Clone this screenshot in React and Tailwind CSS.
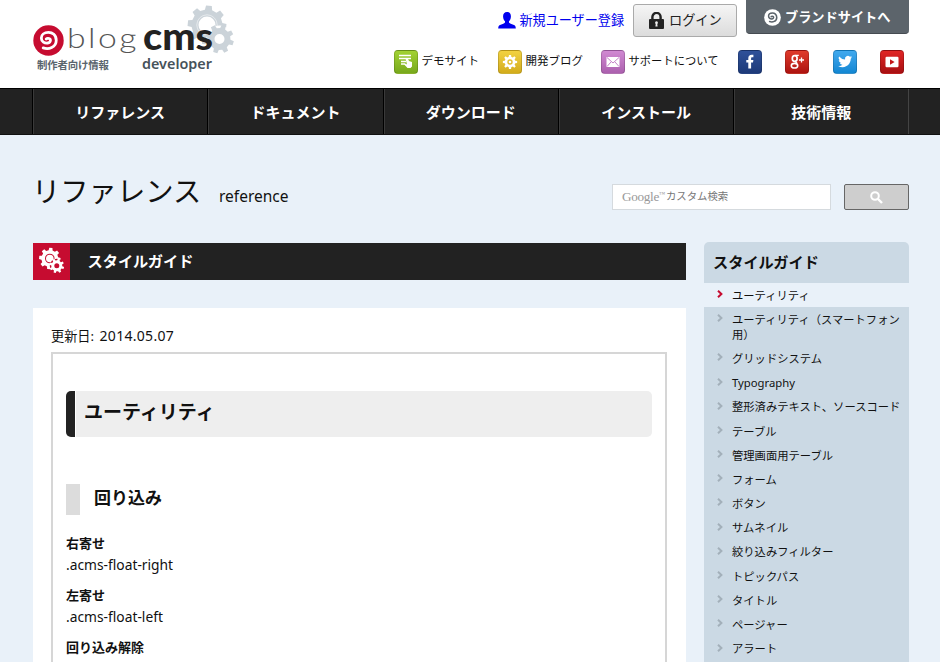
import React from "react";

const JP = "font-['Noto_Sans','Noto_Sans_CJK_JP',sans-serif]";

// Outline of a cog wheel centred on (cx, cy) with a round hole.
function gearPath(cx, cy, outer, inner, hole, teeth, turn = 0) {
  const step = (Math.PI * 2) / teeth;
  const pt = (r, a) => `${(cx + r * Math.cos(a)).toFixed(2)} ${(cy + r * Math.sin(a)).toFixed(2)}`;
  const pts = [];
  for (let i = 0; i < teeth; i++) {
    const a = i * step + turn;
    pts.push(pt(inner, a - step * 0.3), pt(outer, a - step * 0.19), pt(outer, a + step * 0.19), pt(inner, a + step * 0.3));
  }
  return `M${pts.join("L")}Z M${cx + hole} ${cy}a${hole} ${hole} 0 1 0 ${-2 * hole} 0a${hole} ${hole} 0 1 0 ${2 * hole} 0Z`;
}

function Gear({ cx, cy, outer, inner, hole, teeth, turn, ...rest }) {
  return <path fillRule="evenodd" d={gearPath(cx, cy, outer, inner, hole, teeth, turn)} {...rest} />;
}

function Swirl({ size, disc, line }) {
  return (
    <svg width={size} height={size} viewBox="0 0 32 32" className="shrink-0">
      <circle cx="16" cy="16" r="15.7" fill={disc} />
      <path
        d="M10.5 23.6C16 25.6 24 23.4 24 15.8C24 10.2 20 7.6 16 7.6C11.4 7.6 8.6 10.2 8.6 13.4C8.6 17.4 12 19 15.2 18.6C18.6 18.1 19 14.2 16 13.8C14.8 13.6 14 14 13.6 14.4"
        fill="none"
        stroke={line}
        strokeWidth="2.9"
        strokeLinecap="round"
      />
    </svg>
  );
}

function Logo() {
  return (
    <svg width="205" height="72" viewBox="32 2 205 72" className="block">
      <Gear cx={207} cy={25} outer={19.5} inner={15.5} hole={8.5} teeth={8} turn={0.1} fill="#cbd3d9" />
      <circle cx="207" cy="25" r="10.2" fill="none" stroke="#e6eaed" strokeWidth="1" />
      <circle cx="219.5" cy="39" r="13.5" fill="#fff" />
      <Gear cx={219.5} cy={39} outer={14.5} inner={11} hole={5} teeth={8} turn={0.3} fill="#cbd3d9" />
      <svg x="33" y="25" width="31" height="31" viewBox="0 0 32 32">
        <Swirl size={32} disc="#c60c30" line="#fff" />
      </svg>
      <text x="67" y="48" textLength="72" lengthAdjust="spacingAndGlyphs" fontSize="27" className="font-['Lato'] font-light tracking-[2px]" fill="#555">blog</text>
      <text x="143" y="50" textLength="70" lengthAdjust="spacingAndGlyphs" fontSize="37" className="font-['Lato'] font-black" fill="#222">cms</text>
      <text x="37" y="69" textLength="72" fontSize="10.4" className="font-['Noto_Sans_CJK_JP'] font-bold" fill="#5a656d">制作者向け情報</text>
      <text x="142" y="69" textLength="70" lengthAdjust="spacingAndGlyphs" fontSize="14.5" className="font-['Noto_Sans'] font-semibold" fill="#46525a">developer</text>
    </svg>
  );
}

function Tile({ className, children }) {
  return (
    <span className={`flex h-6 w-6 shrink-0 items-center justify-center rounded-[4px] border border-black/15 ${className}`}>
      <svg width="24" height="24" viewBox="0 0 24 24" className="shrink-0">{children}</svg>
    </span>
  );
}

const NAV = ["リファレンス", "ドキュメント", "ダウンロード", "インストール", "技術情報"];

const SIDE = [
  "ユーティリティ（スマートフォン用）",
  "グリッドシステム",
  "Typography",
  "整形済みテキスト、ソースコード",
  "テーブル",
  "管理画面用テーブル",
  "フォーム",
  "ボタン",
  "サムネイル",
  "絞り込みフィルター",
  "トピックパス",
  "タイトル",
  "ページャー",
  "アラート",
];

function SideItem({ label, active }) {
  return (
    <li className={`flex pr-1 pl-[12.5px] pt-[4.6px] pb-[4.6px] ${active ? "bg-[#e9f1f9]" : ""}`}>
      <svg width="6" height="8" viewBox="0 0 6 8" className="mt-[2.4px] mr-[9.5px] shrink-0">
        <path d="M1 .8L4.4 4L1 7.2" fill="none" stroke={active ? "#c60c30" : "#a3b0ba"} strokeWidth="2" />
      </svg>
      <span className="text-[11.3px] leading-[15px]">{label}</span>
    </li>
  );
}

function Header() {
  return (
    <header className="flex h-[88px] justify-between bg-white pr-[31px] pl-8">
      <div className="pt-0.5"><Logo /></div>
      <div className="flex flex-col">
        <div className="flex h-[37px] items-start justify-end">
          <a className="mt-[10px] flex items-center text-[13.1px] leading-5 text-[#0000ee]">
            <svg width="18" height="17" viewBox="0 0 18 17" className="mr-[4px]">
              <path d="M9 0C6.3 0 4.9 2 5.1 4.7C5.2 6.8 6 8.4 7 9.3C7.2 10.8 6.7 11.3 5.3 11.8L2 13C.6 13.6.3 14.5.2 16.5H17.8C17.7 14.5 17.4 13.6 16 13L12.7 11.8C11.3 11.3 10.8 10.8 11 9.3C12 8.4 12.8 6.8 12.9 4.7C13.1 2 11.7 0 9 0Z" fill="#0000ee" />
            </svg>
            新規ユーザー登録
          </a>
          <a className="mt-1 ml-[9px] flex h-[33px] w-[104px] items-center rounded-[3px] border border-[#aaa] bg-linear-to-b from-[#f5f5f5] to-[#dcdcdc] pl-[15px] text-[13.2px] text-[#222]">
            <svg width="15" height="17" viewBox="0 0 15 17" className="mr-[5px]">
              <path d="M3.4 8V5A4.1 4.1 0 0 1 11.6 5V8" fill="none" stroke="#222" strokeWidth="2.4" />
              <rect y="7" width="15" height="10" rx="1" fill="#222" />
              <path d="M7.5 9.3A1.5 1.5 0 0 1 8.3 12L8.6 14.6H6.4L6.7 12A1.5 1.5 0 0 1 7.5 9.3Z" fill="#eee" />
            </svg>
            ログイン
          </a>
          <a className="ml-[9px] flex h-[34px] w-[163px] items-center rounded-b-[4px] border-b border-[#454b51] bg-[#5c646b] pt-0.5 pl-[18px] text-[13.2px] font-semibold text-white">
            <span className="mr-[4px]"><Swirl size={17} disc="#fff" line="#5c646b" /></span>
            ブランドサイトへ
          </a>
        </div>
        <div className="mt-[13px] flex items-center pr-[5px] text-[11.5px] text-[#111]">
          <Tile className="bg-linear-to-b from-[#a2d233] to-[#78a91c]">
            <g stroke="#fff" strokeWidth="1.4"><path d="M5 5.5H17M5 8.5H17M7 11.5H12M7 14H11" /></g>
            <path d="M11.5 8.5L13.5 8L15 11L18 12V16.5L16.5 18H13.5L10.2 14.6L11.2 13.6L13 14.4Z" fill="#fff" />
          </Tile>
          <span className="ml-1 w-[76px] pb-0.5">デモサイト</span>
          <Tile className="bg-linear-to-b from-[#f2d240] to-[#d3ac1b]">
            <Gear cx={12} cy={12} outer={7.2} inner={5.4} hole={2.7} teeth={8} turn={0} fill="#fff" />
            <circle cx="12" cy="12" r="1.3" fill="#fff" />
          </Tile>
          <span className="ml-1 w-[75px] pb-0.5">開発ブログ</span>
          <Tile className="bg-linear-to-b from-[#d189d2] to-[#ab60ae]">
            <rect x="5.5" y="7" width="13" height="10" fill="#fff" />
            <path d="M6 7.5L12 13L18 7.5M6 16.5L10 12M18 16.5L14 12" fill="none" stroke="#bd76bf" strokeWidth=".9" />
          </Tile>
          <span className="ml-1 w-[109px] pb-0.5 text-[11.3px]">サポートについて</span>
          <Tile className="bg-linear-to-b from-[#2f5199] to-[#1d3a79]">
            <path d="M10.3 18.5V12.6H8.3V10H10.3V8.3C10.3 6 11.6 4.8 13.7 4.8H15.4V7.3H14.2C13.4 7.3 13.1 7.7 13.1 8.4V10H15.4L15 12.6H13.1V18.5Z" fill="#fff" />
          </Tile>
          <Tile className="ml-[23.5px] bg-linear-to-b from-[#e03a2b] to-[#ad1210]">
            <g fill="none" stroke="#fff">
              <ellipse cx="9.7" cy="8.5" rx="2.4" ry="2.9" strokeWidth="1.7" />
              <path d="M10 5.4H13.8M10 11.2L12 13.3" strokeWidth="1.4" />
              <ellipse cx="9.5" cy="15.7" rx="3.2" ry="2.3" strokeWidth="1.6" />
              <path d="M14 10H19M16.5 7.5V12.5" strokeWidth="1.3" />
            </g>
          </Tile>
          <Tile className="ml-[23.5px] bg-linear-to-b from-[#40a9ee] to-[#1187d3]">
            <path transform="translate(5.2 4.6) scale(.58)" d="M23.95 4.57a10 10 0 0 1-2.82.78 4.96 4.96 0 0 0 2.16-2.73c-.95.56-2 .96-3.13 1.19a4.92 4.92 0 0 0-8.38 4.48A13.98 13.98 0 0 1 1.64 3.16a4.92 4.92 0 0 0 1.52 6.57 4.9 4.9 0 0 1-2.23-.61v.06a4.92 4.92 0 0 0 3.95 4.83 5 5 0 0 1-2.21.08 4.94 4.94 0 0 0 4.6 3.42A9.87 9.87 0 0 1 0 19.54a13.99 13.99 0 0 0 7.55 2.21c9.05 0 14-7.5 14-13.98 0-.21 0-.42-.02-.63a9.94 9.94 0 0 0 2.46-2.55z" fill="#fff" />
          </Tile>
          <Tile className="ml-[23.5px] bg-linear-to-b from-[#e02525] to-[#a80f12]">
            <rect x="5.5" y="6.8" width="13" height="10.4" rx="1.2" fill="#fff" />
            <path d="M10 9.3L14.6 12L10 14.7Z" fill="#c41719" />
          </Tile>
        </div>
      </div>
    </header>
  );
}

export default function App() {
  return (
    <div className={`h-[662px] w-[940px] overflow-hidden bg-[#e9f1f9] text-[#111] ${JP}`}>
      <Header />
      <nav className="flex h-[47px] border-y border-t-black border-b-[#111] bg-[#222] pl-8">
        {NAV.map((n) => (
          <a key={n} className="flex w-[175.3px] items-center justify-center border-l border-black pt-px text-[15px] font-semibold text-white shadow-[inset_1px_0_0_#3a3a3a]">{n}</a>
        ))}
        <span className="w-px bg-[#444]" />
      </nav>

      <div className="flex h-[107px] items-start justify-between pr-[31px] pl-[33px]">
        <div className="flex items-baseline pt-[35px]">
          <h1 className="-ml-px w-[187px] text-[28.3px] leading-[42px] font-normal">リファレンス</h1>
          <span className="text-[15.5px]">reference</span>
        </div>
        <div className="mt-[49px] flex h-[26px]">
          <div className="flex w-[219px] items-center border border-[#d5dade] bg-white pl-[9px] text-[10.4px] text-[#777]">
            <span className="font-['Liberation_Serif'] text-[13.2px] tracking-[-0.3px] text-[#999]">Google</span>
            <span className="self-start pt-[5px] pr-px font-['Liberation_Serif'] text-[6px] text-[#999]">™</span>
            カスタム検索
          </div>
          <button className="ml-[13px] flex w-[65px] items-center justify-center rounded-[2px] border border-[#666] bg-[#cecece]">
            <svg width="13" height="13" viewBox="0 0 13 13">
              <circle cx="5" cy="5" r="3.8" fill="none" stroke="#fff" strokeWidth="2" />
              <path d="M8 8L12 12" stroke="#fff" strokeWidth="2.4" />
            </svg>
          </button>
        </div>
      </div>

      <div className="flex items-start pl-[33px]">
        <main className="w-[653px]">
          <div className="mt-px flex h-[37px] items-center bg-[#222]">
            <span className="flex h-full w-[37px] items-center justify-center bg-[#c60c30]">
              <svg width="37" height="37" viewBox="0 0 37 37">
                <Gear cx={16.8} cy={15.5} outer={10.8} inner={8.4} hole={4.8} teeth={8} turn={0.1} fill="#fff" />
                <circle cx="16.8" cy="15.5" r="3.8" fill="#fff" />
                <circle cx="23.8" cy="22.8" r="7" fill="#c60c30" />
                <Gear cx={23.8} cy={22.8} outer={7.4} inner={5.5} hole={2.5} teeth={8} turn={0.3} fill="#fff" />
              </svg>
            </span>
            <h2 className="ml-[17.5px] text-[15.2px] font-bold text-white">スタイルガイド</h2>
          </div>
          <div className="mt-[28px] h-[400px] bg-white px-[18px] pt-[17px]">
            <p className="h-[27px] text-[13.2px] leading-[22px]">更新日: <span className="ml-0.5 text-[14px] tracking-[0.3px]">2014.05.07</span></p>
            <div className="h-[400px] w-[616px] border-2 border-[#d6d6d6] px-[13px] pt-[37px]">
              <div className="flex h-[46px] items-center overflow-hidden rounded-[5px] bg-[#eee]">
                <span className="h-full w-[10px] border-r border-white bg-[#222]" />
                <h3 className="ml-2 pb-[4px] text-[19px] font-bold">ユーティリティ</h3>
              </div>
              <div className="mt-[47px] flex h-[31px] items-center">
                <span className="h-full w-[14px] bg-[#dcdcdc]" />
                <h4 className="ml-[14px] pb-[3px] text-[17px] font-bold">回り込み</h4>
              </div>
              <dl className="mt-[17px] text-[13.8px] leading-[22px]">
                <dt className="text-[13px] font-bold">右寄せ</dt>
                <dd className="mb-2">.acms-float-right</dd>
                <dt className="text-[13px] font-bold">左寄せ</dt>
                <dd className="mb-2">.acms-float-left</dd>
                <dt className="text-[13px] font-bold">回り込み解除</dt>
              </dl>
            </div>
          </div>
        </main>
        <aside className="ml-[18px] h-[420px] w-[205px] rounded-t-[5px] bg-[#cbd9e4]">
          <h2 className="flex h-[41px] items-center pl-[9px] text-[15.2px] font-bold">スタイルガイド</h2>
          <ul>
            <SideItem label="ユーティリティ" active />
            {SIDE.map((s) => <SideItem key={s} label={s} />)}
          </ul>
        </aside>
      </div>
    </div>
  );
}
